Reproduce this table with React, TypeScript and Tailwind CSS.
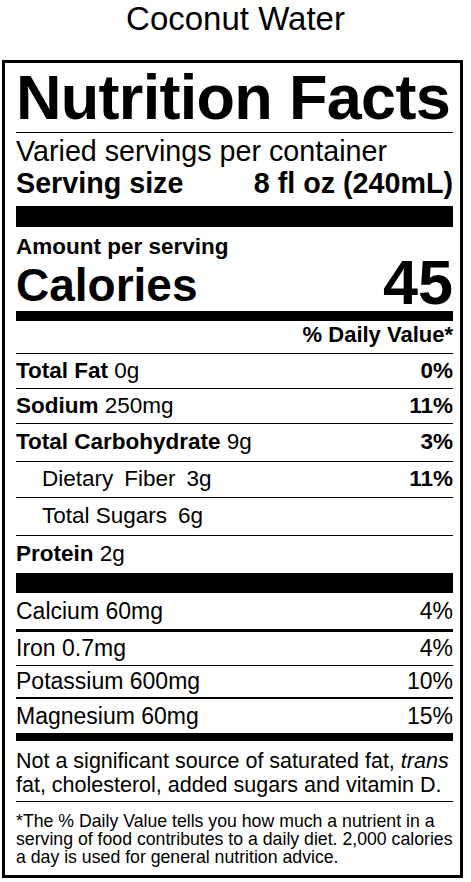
import React from "react";

function Row({
  h,
  border,
  children,
  right,
  rightBold = true,
  size = "text-[22.5px]",
}: {
  h: string;
  border: string;
  children: React.ReactNode;
  right?: string;
  rightBold?: boolean;
  size?: string;
}) {
  return (
    <div className={`${h} ${border} ${size} border-black flex items-center justify-between leading-none whitespace-nowrap shrink-0`}>
      <div>{children}</div>
      {right ? <div className={rightBold ? "font-bold" : ""}>{right}</div> : null}
    </div>
  );
}

export default function App() {
  return (
    <div className="w-[471px] h-[882px] bg-white text-black font-['Liberation_Sans',Arial,sans-serif]">
      <div className="h-[60px] pt-[1.5px] text-center text-[33px] leading-none">Coconut Water</div>
      <div className="ml-[2px] w-[461px] h-[818px] border-[3px] border-black pl-[11px] pr-[7px] flex flex-col">
        <div className="h-[70px] shrink-0 border-b border-black pt-[2.5px] text-[63px] font-bold leading-none tracking-[-0.7px] whitespace-nowrap">
          Nutrition Facts
        </div>
        <div className="h-[73px] shrink-0 pt-[2px]">
          <div className="text-[28.7px] leading-[32px] whitespace-nowrap">Varied servings per container</div>
          <div className="flex justify-between text-[28.7px] leading-[32px] font-bold whitespace-nowrap">
            <span>Serving size</span>
            <span>8 fl oz (240mL)</span>
          </div>
        </div>
        <div className="h-[21px] shrink-0 bg-black" />
        <div className="h-[84px] shrink-0 pt-[9px]">
          <div className="text-[22.5px] font-bold leading-none">Amount per serving</div>
          <div className="flex justify-between items-start">
            <span className="text-[46px] font-bold leading-none mt-[3px]">Calories</span>
            <span className="text-[63px] font-bold leading-none mt-[-8px]">45</span>
          </div>
        </div>
        <div className="h-[10px] shrink-0 bg-black" />
        <div className="h-[33px] shrink-0 pt-[3px] text-right text-[22px] font-bold leading-none border-b border-black">
          % Daily Value*
        </div>
        <Row h="h-[35px]" border="border-b" right="0%">
          <span className="font-bold">Total Fat</span> 0g
        </Row>
        <Row h="h-[35px]" border="border-b" right="11%">
          <span className="font-bold">Sodium</span> 250mg
        </Row>
        <Row h="h-[38px]" border="border-b" right="3%">
          <span className="font-bold">Total Carbohydrate</span> 9g
        </Row>
        <Row h="h-[36px]" border="border-b" right="11%">
          <span className="pl-[26px]">Dietary</span>
          <span className="ml-[11px]">Fiber</span>
          <span className="ml-[11px]">3g</span>
        </Row>
        <Row h="h-[38px]" border="border-b">
          <span className="pl-[26px]">Total Sugars</span>
          <span className="ml-[11px]">6g</span>
        </Row>
        <Row h="h-[37px]" border="">
          <span className="font-bold">Protein</span> 2g
        </Row>
        <div className="h-[20px] shrink-0 bg-black" />
        <Row h="h-[39px]" border="border-b-[3px]" right="4%" rightBold={false} size="text-[23px]">
          Calcium 60mg
        </Row>
        <Row h="h-[34px]" border="border-b" right="4%" rightBold={false} size="text-[23px]">
          Iron 0.7mg
        </Row>
        <Row h="h-[33px]" border="border-b-[2px]" right="10%" rightBold={false} size="text-[23px]">
          Potassium 600mg
        </Row>
        <Row h="h-[34px]" border="" right="15%" rightBold={false} size="text-[23px]">
          Magnesium 60mg
        </Row>
        <div className="h-[8px] shrink-0 bg-black" />
        <div className="h-[61px] shrink-0 pt-[7.5px] border-b border-black text-[21.5px] leading-[24px] whitespace-nowrap">
          Not a significant source of saturated fat, <i>trans</i>
          <br />
          fat, cholesterol, added sugars and vitamin D.
        </div>
        <div className="flex-1 pt-[9.5px] text-[17.7px] leading-[18px] whitespace-nowrap">
          *The % Daily Value tells you how much a nutrient in a
          <br />
          serving of food contributes to a daily diet. 2,000 calories
          <br />
          a day is used for general nutrition advice.
        </div>
      </div>
    </div>
  );
}
